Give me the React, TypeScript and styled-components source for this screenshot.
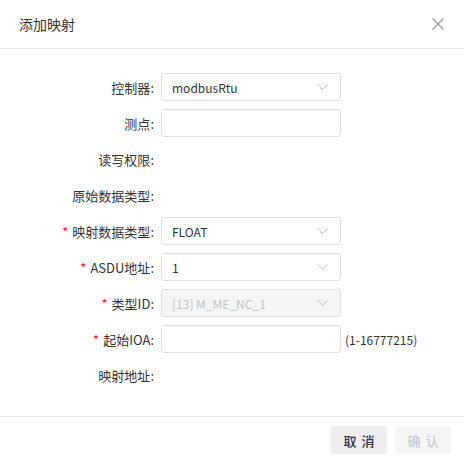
import React from "react";
import styled, { createGlobalStyle } from "styled-components";

const GlobalStyle = createGlobalStyle`
  html, body {
    margin: 0;
    padding: 0;
    background: #fff;
  }
  body {
    font-family: "Noto Sans CJK SC", "Noto Sans", sans-serif;
    color: #333;
  }
`;

const Dialog = styled.div`
  width: 464px;
  height: 463px;
  display: flex;
  flex-direction: column;
  background: #fff;
`;

const Header = styled.div`
  height: 49px;
  box-sizing: border-box;
  display: flex;
  align-items: center;
  justify-content: space-between;
  padding: 0 18px 0 19px;
  border-bottom: 1px solid #e8e8e8;
  flex-shrink: 0;
`;

const Title = styled.div`
  font-size: 14px;
  color: #333;
`;

const CloseBtn = styled.button`
  width: 16px;
  height: 16px;
  padding: 0;
  border: none;
  background: transparent;
  display: flex;
  align-items: center;
  justify-content: center;
  cursor: pointer;
`;

const Body = styled.div`
  flex: 1;
  padding-top: 24px;
  display: flex;
  flex-direction: column;
  gap: 8px;
`;

const Row = styled.div`
  display: flex;
  align-items: center;
  height: 28px;
  font-size: 12px;
`;

const Label = styled.div`
  width: 154px;
  margin-right: 7px;
  text-align: right;
  color: #333;
  font-size: 13px;
  white-space: nowrap;
`;

const Star = styled.span`
  color: #f5222d;
  margin-right: 4px;
`;

const Field = styled.div<{ $disabled?: boolean }>`
  width: 180px;
  height: 28px;
  box-sizing: border-box;
  border: 1px solid #dcdfe6;
  border-radius: 3px;
  background: ${(p) => (p.$disabled ? "#f5f5f5" : "#fff")};
  color: ${(p) => (p.$disabled ? "#c0c4cc" : "#333")};
  display: flex;
  align-items: center;
  justify-content: space-between;
  padding: 0 12px 0 10px;
  font-size: 12px;
`;

const Hint = styled.span`
  margin-left: 4px;
  color: #333;
`;

const Footer = styled.div`
  height: 47px;
  box-sizing: border-box;
  border-top: 1px solid #e8e8e8;
  display: flex;
  justify-content: flex-end;
  align-items: flex-start;
  padding: 9px 13px 0 0;
  gap: 8px;
  flex-shrink: 0;
`;

const Button = styled.button<{ $disabled?: boolean }>`
  width: 56px;
  height: 28px;
  border: none;
  border-radius: 3px;
  font-family: inherit;
  font-size: 13px;
  letter-spacing: 5px;
  text-indent: 5px;
  background: ${(p) => (p.$disabled ? "#f5f5f5" : "#ebedf0")};
  color: ${(p) => (p.$disabled ? "#c0c4cc" : "#333")};
  font-weight: ${(p) => (p.$disabled ? 400 : 500)};
  cursor: ${(p) => (p.$disabled ? "not-allowed" : "pointer")};
`;

const Chevron = () => (
  <svg width="11" height="6" viewBox="0 0 11 6" fill="none">
    <path d="M0.5 0.5 L5.5 5.5 L10.5 0.5" stroke="#c0c4cc" strokeWidth="1" />
  </svg>
);

type RowData = {
  label: string;
  required?: boolean;
  kind?: "select" | "input" | "text";
  value?: string;
  disabled?: boolean;
  hint?: string;
};

const rows: RowData[] = [
  { label: "控制器", kind: "select", value: "modbusRtu" },
  { label: "测点", kind: "input" },
  { label: "读写权限", kind: "text" },
  { label: "原始数据类型", kind: "text" },
  { label: "映射数据类型", required: true, kind: "select", value: "FLOAT" },
  { label: "ASDU地址", required: true, kind: "select", value: "1" },
  { label: "类型ID", required: true, kind: "select", value: "[13] M_ME_NC_1", disabled: true },
  { label: "起始IOA", required: true, kind: "input", hint: "(1-16777215)" },
  { label: "映射地址", kind: "text" },
];

export default function App() {
  return (
    <>
      <GlobalStyle />
      <Dialog>
        <Header>
          <Title>添加映射</Title>
          <CloseBtn aria-label="close">
            <svg width="12" height="12" viewBox="0 0 12 12">
              <path d="M0.5 0.5 L11.5 11.5 M11.5 0.5 L0.5 11.5" stroke="#999" strokeWidth="1.2" />
            </svg>
          </CloseBtn>
        </Header>
        <Body>
          {rows.map((r) => (
            <Row key={r.label}>
              <Label>
                {r.required && <Star>*</Star>}
                {r.label}:
              </Label>
              {r.kind === "select" && (
                <Field $disabled={r.disabled}>
                  <span>{r.value}</span>
                  <Chevron />
                </Field>
              )}
              {r.kind === "input" && <Field />}
              {r.hint && <Hint>{r.hint}</Hint>}
            </Row>
          ))}
        </Body>
        <Footer>
          <Button>取消</Button>
          <Button $disabled>确认</Button>
        </Footer>
      </Dialog>
    </>
  );
}
